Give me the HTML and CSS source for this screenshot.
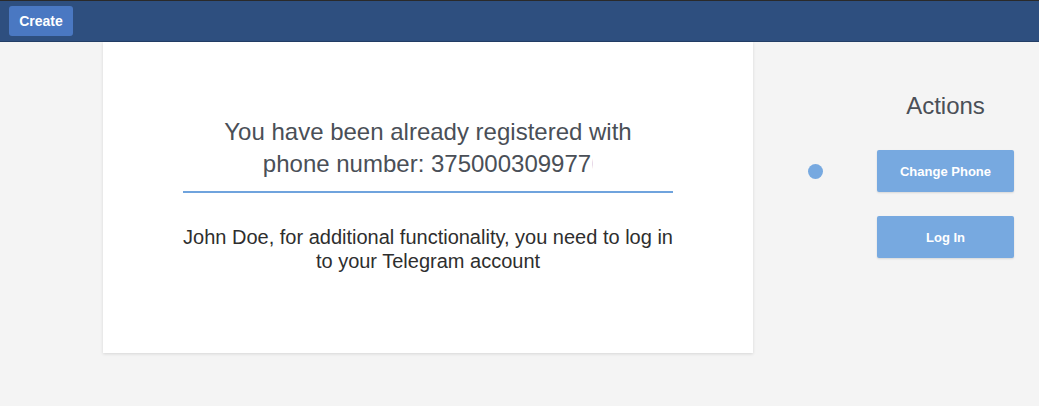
FILE: index.html
```html
<!DOCTYPE html>
<html>
<head>
<meta charset="utf-8">
<link rel="stylesheet" href="styles.css">
</head>
<body>
<header class="topbar">
  <button class="create-btn">Create</button>
</header>
<main class="layout">
  <section class="card">
    <div class="title-field">
      <h2 class="card-title">You have been already registered with phone number: 375000309977<span class="clip">6</span></h2>
    </div>
    <p class="card-text">John Doe, for additional functionality, you need to log in to your Telegram account</p>
  </section>
  <aside class="actions">
    <div></div>
    <h3 class="actions-title">Actions</h3>
    <span class="dot"></span>
    <button class="action-btn">Change Phone</button>
    <div></div>
    <button class="action-btn">Log In</button>
  </aside>
</main>
</body>
</html>
```
FILE: styles.css
```css
* { box-sizing: border-box; }
html, body { margin: 0; padding: 0; }
body {
  background: #f4f4f4;
  font-family: "Liberation Sans", Arial, sans-serif;
  width: 1039px;
  height: 406px;
  overflow: hidden;
}
.topbar {
  height: 42px;
  background: #2e4f7f;
  border-top: 1px solid #2a2a2a;
  border-bottom: 1px solid #233e66;
  padding: 5px 9px;
}
.create-btn {
  display: block;
  width: 64px;
  height: 30px;
  border: none;
  border-radius: 3px;
  background: #4a78c2;
  color: #fff;
  font-family: "Liberation Sans", Arial, sans-serif;
  font-weight: bold;
  font-size: 14px;
  padding: 0;
}
.layout {
  display: flex;
  padding-left: 103px;
}
.card {
  width: 650px;
  height: 311px;
  background: #fff;
  box-shadow: 0 1px 3px rgba(0,0,0,0.12);
  padding-top: 74px;
  display: flex;
  flex-direction: column;
  align-items: center;
}
.title-field {
  width: 490px;
  padding-bottom: 11px;
  border-bottom: 2px solid #6fa3dd;
  display: flex;
  justify-content: center;
}
.card-title {
  width: 440px;
  margin: 0;
  font-weight: normal;
  font-size: 24px;
  line-height: 32px;
  color: #4a4f57;
  text-align: center;
}
.clip {
  display: inline-block;
  width: 2px;
  overflow: hidden;
  vertical-align: bottom;
  color: #9cc0e6;
}
.card-text {
  width: 500px;
  margin: 32px 0 0;
  font-size: 20px;
  line-height: 24px;
  color: #2e2e2e;
  text-align: center;
}
.actions {
  display: grid;
  grid-template-columns: 15px 137px;
  column-gap: 54px;
  row-gap: 24px;
  align-items: center;
  align-content: start;
  padding-left: 55px;
  padding-top: 50px;
}
.actions-title {
  margin: 0 0 6px;
  font-weight: normal;
  font-size: 24px;
  line-height: 28px;
  color: #4a4f57;
  text-align: center;
}
.dot {
  width: 15px;
  height: 15px;
  border-radius: 50%;
  background: #77a9e0;
}
.action-btn {
  height: 42px;
  border: none;
  border-radius: 2px;
  background: #77a9e0;
  color: #fff;
  font-family: "Liberation Sans", Arial, sans-serif;
  font-weight: bold;
  font-size: 13px;
  box-shadow: 0 1px 2px rgba(0,0,0,0.12);
}
```
